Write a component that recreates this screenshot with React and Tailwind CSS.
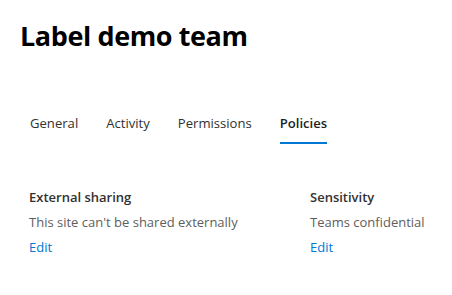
export default function App() {
  const tabs = ["General", "Activity", "Permissions", "Policies"];
  const active = "Policies";

  return (
    <div className="w-[452px] h-[295px] bg-white font-['Open_Sans',sans-serif] overflow-hidden">
      <h1 className="pl-[20px] pt-[18px] text-[27px] leading-[36px] font-bold text-black tracking-[-0.4px]">
        Label demo team
      </h1>

      <div className="flex gap-[28px] pl-[30px] mt-[59px]">
        {tabs.map((t) => (
          <div key={t} className="flex flex-col items-center">
            <span
              className={`text-[13.1px] leading-[20px] ${
                t === active ? "font-semibold text-[#201f1e]" : "text-[#323130]"
              }`}
            >
              {t}
            </span>
            <div className={`mt-[9px] h-[2px] w-full ${t === active ? "bg-[#0078d4]" : "bg-transparent"}`} />
          </div>
        ))}
      </div>

      <div className="flex pl-[29px] mt-[43px]">
        <div className="w-[281px] flex flex-col gap-[5px]">
          <span className="text-[13px] leading-[20px] font-semibold text-[#323130]">External sharing</span>
          <span className="text-[13px] leading-[20px] text-[#605e5c]">This site can't be shared externally</span>
          <span className="text-[13px] leading-[20px] text-[#0078d4]">Edit</span>
        </div>
        <div className="flex flex-col gap-[5px]">
          <span className="text-[13px] leading-[20px] font-semibold text-[#323130]">Sensitivity</span>
          <span className="text-[13px] leading-[20px] text-[#605e5c]">Teams confidential</span>
          <span className="text-[13px] leading-[20px] text-[#0078d4]">Edit</span>
        </div>
      </div>
    </div>
  );
}
